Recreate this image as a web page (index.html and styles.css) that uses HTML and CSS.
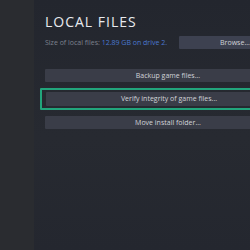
FILE: index.html
```html
<!DOCTYPE html>
<html lang="en">
  <head>
    <meta charset="UTF-8" />
    <meta name="viewport" content="width=device-width, initial-scale=1.0" />
    <title>Local Files</title>
    <link rel="stylesheet" href="styles.css">
  </head>

  <body>
    <div class="layout">
      <aside class="sidebar"></aside>
      <main class="panel">
        <h1 class="title">LOCAL FILES</h1>

        <div class="size-row">
          <div class="size-text">
            Size of local files: <span class="size-link">12.89 GB on drive 2.</span>
          </div>
          <button class="btn btn-browse">Browse...</button>
        </div>

        <div class="actions">
          <button class="btn">Backup game files...</button>
          <div class="focus-ring">
            <button class="btn">Verify integrity of game files...</button>
          </div>
          <button class="btn">Move install folder...</button>
        </div>
      </main>
    </div>
  </body>
</html>
```

FILE: styles.css
```css
html,
body {
  margin: 0;
  height: 100%;
  overflow: hidden;
}

body {
  font-family: "Open Sans", "Liberation Sans", sans-serif;
  background: #24272f;
  color: #dcdee2;
}

.layout {
  display: flex;
  height: 100%;
}

.sidebar {
  width: 34px;
  flex-shrink: 0;
  background: #2a2c30;
}

.panel {
  flex: 1;
  min-width: 0;
  padding: 14px 0 0 11px;
  background: linear-gradient(to bottom, #23262e, #272a31 55%, #24272f);
}

.title {
  margin: 0;
  width: 246px;
  font-size: 14px;
  font-weight: 400;
  letter-spacing: 1px;
  line-height: 16px;
  color: #e8eaee;
}

.size-row {
  width: 246px;
  display: flex;
  align-items: center;
  justify-content: space-between;
  margin-top: 6px;
}

.size-text {
  font-size: 7px;
  color: #7d828e;
}

.size-link {
  color: #4a78d0;
}

.btn {
  display: block;
  width: 246px;
  height: 13px;
  padding: 0;
  border: none;
  border-radius: 1px;
  background: #3a3d48;
  color: #d2d4d9;
  font-family: inherit;
  font-size: 7px;
  line-height: 13px;
  text-align: center;
}

.btn-browse {
  width: 112px;
  background: #3d4150;
}

.actions {
  width: 246px;
  margin-top: 20px;
  display: flex;
  flex-direction: column;
  gap: 6px;
}

.focus-ring {
  margin: 0 -5px 0 -5px;
  padding: 2px 4px;
  border: 2px solid #22a57c;
  border-radius: 1px;
}

.focus-ring .btn {
  height: 14px;
  line-height: 14px;
}
```
